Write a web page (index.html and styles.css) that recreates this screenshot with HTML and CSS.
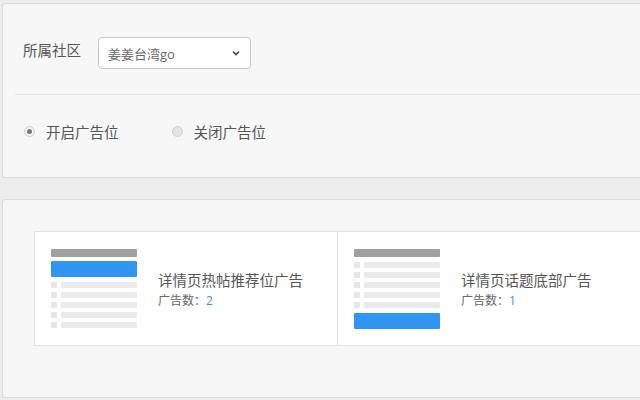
FILE: index.html
```html
<!DOCTYPE html>
<html lang="zh-CN">
<head>
    <meta charset="UTF-8">
    <meta name="viewport" content="width=device-width, initial-scale=1.0">
    <title>广告位设置</title>
    <link rel="stylesheet" href="styles.css">
</head>
<body>
    <div class="page">
        <div class="panel panel-top">
            <div class="field-row">
                <label class="field-label">所属社区</label>
                <div class="select">
                    <span>姜姜台湾go</span>
                    <svg class="chevron" width="8" height="6" viewBox="0 0 8 6">
                        <path d="M1 1.5 L4 4.5 L7 1.5" fill="none" stroke="#444" stroke-width="1.6"/>
                    </svg>
                </div>
            </div>
            <div class="radio-row">
                <label class="radio">
                    <span class="radio-dot checked"></span>
                    <span>开启广告位</span>
                </label>
                <label class="radio">
                    <span class="radio-dot"></span>
                    <span>关闭广告位</span>
                </label>
            </div>
        </div>

        <div class="panel panel-ads">
            <div class="cards">
                <div class="card">
                    <div class="thumb">
                        <div class="t-head"></div>
                        <div class="t-block"></div>
                        <div class="t-rows">
                            <div class="t-row"><i></i><b></b></div>
                            <div class="t-row"><i></i><b></b></div>
                            <div class="t-row"><i></i><b></b></div>
                            <div class="t-row"><i></i><b></b></div>
                            <div class="t-row"><i></i><b></b></div>
                        </div>
                    </div>
                    <div class="card-text">
                        <div class="card-title">详情页热帖推荐位广告</div>
                        <div class="card-count">广告数：<span class="num">2</span></div>
                    </div>
                </div>
                <div class="card last">
                    <div class="thumb">
                        <div class="t-head"></div>
                        <div class="t-rows">
                            <div class="t-row"><i></i><b></b></div>
                            <div class="t-row"><i></i><b></b></div>
                            <div class="t-row"><i></i><b></b></div>
                            <div class="t-row"><i></i><b></b></div>
                            <div class="t-row"><i></i><b></b></div>
                        </div>
                        <div class="t-block bottom"></div>
                    </div>
                    <div class="card-text">
                        <div class="card-title">详情页话题底部广告</div>
                        <div class="card-count">广告数：<span class="num">1</span></div>
                    </div>
                </div>
            </div>
        </div>
    </div>
</body>
</html>
```

FILE: styles.css
```css
html, body {
    margin: 0;
    height: 100%;
}
body {
    background: #ededed;
    font-family: "Open Sans", "Noto Sans CJK SC", sans-serif;
    color: #555;
    overflow: hidden;
}
.page {
    padding: 3px 0 0 2px;
}
.panel {
    background: #f7f7f7;
    border: 1px solid #dadada;
    border-right: none;
    border-radius: 3px 0 0 3px;
}
.panel-top {
    padding-left: 12px;
}
.field-row {
    display: flex;
    align-items: center;
    padding: 33px 0 25px 8px;
    border-bottom: 1px solid #e6e6e6;
}
.field-label {
    font-size: 14.5px;
    line-height: 20px;
    width: 75px;
    margin-top: -4px;
}
.select {
    height: 30px;
    width: 132px;
    border: 1px solid #c9c9c9;
    border-radius: 4px;
    background: #fff;
    display: flex;
    align-items: center;
    justify-content: space-between;
    padding: 0 10px 0 9px;
    font-size: 13px;
    color: #666;
}
.chevron {
    display: block;
}
.radio-row {
    display: flex;
    padding: 28px 0 34px 9px;
}
.radio {
    display: flex;
    align-items: center;
    font-size: 14.5px;
    line-height: 20px;
    margin-right: 53px;
}
.radio-dot {
    width: 9px;
    height: 9px;
    border-radius: 50%;
    border: 1px solid #cfcfcf;
    background: #e4e4e4;
    margin-right: 11px;
    margin-top: -3px;
    position: relative;
}
.radio-dot.checked {
    background: #f2f2f2;
}
.radio-dot.checked::after {
    content: "";
    position: absolute;
    left: 2px;
    top: 2px;
    width: 5px;
    height: 5px;
    border-radius: 50%;
    background: #7a7a7a;
}
.panel-ads {
    margin-top: 21px;
    padding: 31px 0 51px 31px;
}
.cards {
    display: flex;
    background: #fff;
    border: 1px solid #e2e2e2;
    border-right: none;
}
.card {
    display: flex;
    align-items: center;
    width: 286px;
    padding: 17px 0 16px 16px;
    border-right: 1px solid #e5e5e5;
}
.card.last {
    flex: 1;
    border-right: none;
}
.thumb {
    width: 86px;
    height: 80px;
    display: flex;
    flex-direction: column;
}
.t-head {
    height: 8px;
    background: #a0a0a0;
    border-radius: 1px;
}
.t-block {
    height: 16px;
    background: #3196f3;
    border-radius: 1px;
    margin-top: 4px;
}
.t-block.bottom {
    margin-top: 5px;
}
.t-rows {
    display: flex;
    flex-direction: column;
    gap: 4px;
    margin-top: 5px;
}
.t-row {
    display: flex;
    height: 6px;
}
.t-row i {
    width: 6px;
    background: #e6e6e6;
    margin-right: 4px;
}
.t-row b {
    flex: 1;
    background: #ebebeb;
}
.card-text {
    margin-left: 21px;
    margin-top: 4px;
}
.card-title {
    font-size: 14.5px;
    line-height: 20px;
    color: #555;
}
.card-count {
    font-size: 12px;
    line-height: 20px;
    color: #666;
}
.num {
    color: #4a8fd8;
}
```
